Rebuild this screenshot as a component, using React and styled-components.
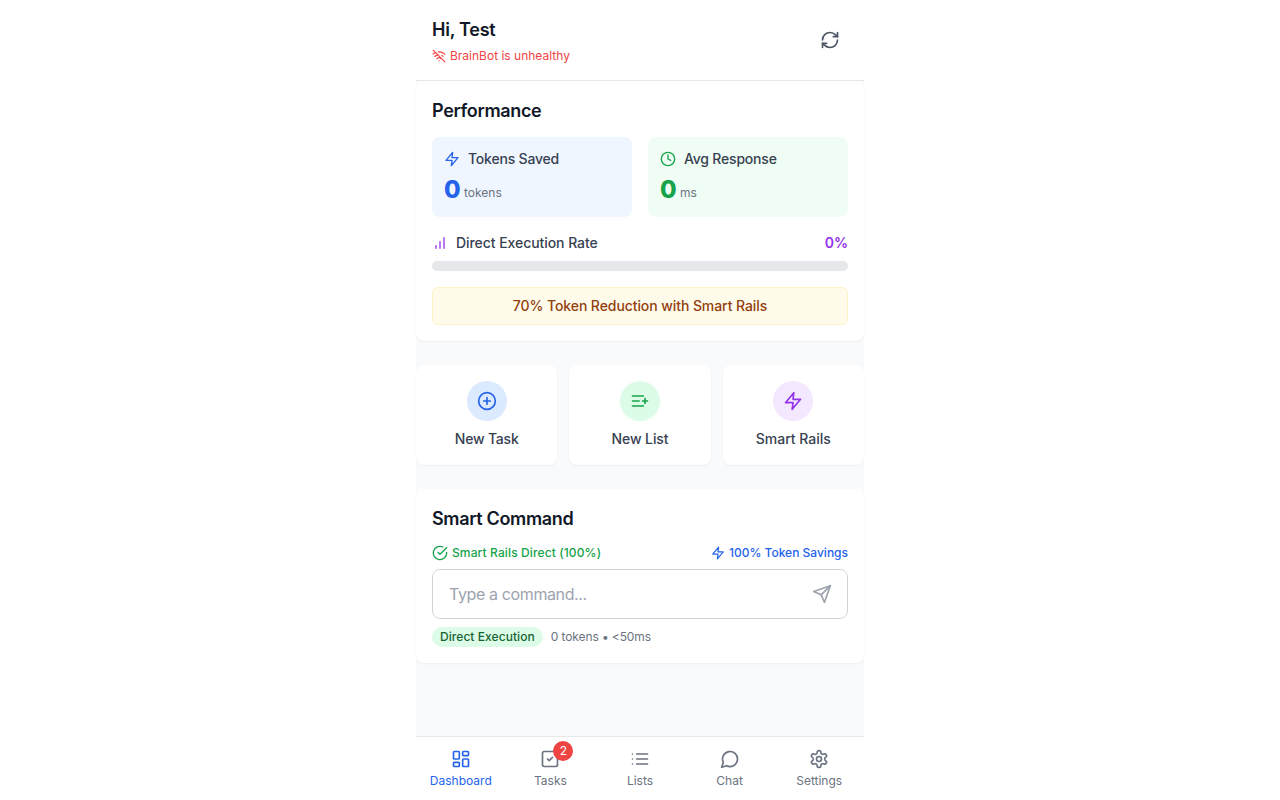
import React from "react";
import styled, { createGlobalStyle } from "styled-components";

const GlobalStyle = createGlobalStyle`
  *, *::before, *::after { box-sizing: border-box; }
  body {
    margin: 0;
    background: #fff;
    font-family: Inter, "Liberation Sans", sans-serif;
    color: #111827;
  }
  h1, h2, p { margin: 0; }
  button, input { font: inherit; }
  svg { display: block; flex-shrink: 0; }
`;

const Shell = styled.div`
  display: flex;
  flex-direction: column;
  width: 448px;
  height: 100vh;
  margin: 0 auto;
  background: #f9fafb;
`;

const Header = styled.header`
  display: flex;
  align-items: center;
  justify-content: space-between;
  padding: 16px;
  background: #fff;
  border-bottom: 1px solid #e5e7eb;
`;

const Title = styled.h1`
  font-size: 18px;
  line-height: 28px;
  font-weight: 600;
  letter-spacing: -0.25px;
`;

const Status = styled.p`
  display: flex;
  align-items: center;
  gap: 4px;
  margin-top: 4px;
  font-size: 12px;
  line-height: 16px;
  color: #ef4444;
`;

const IconButton = styled.button`
  display: flex;
  padding: ${(p) => p.$pad || "0"};
  border: 0;
  background: none;
  color: ${(p) => p.$color};
`;

const Main = styled.main`
  flex: 1;
  display: flex;
  flex-direction: column;
  gap: 24px;
  min-height: 0;
`;

const Card = styled.section`
  padding: 16px;
  background: #fff;
  border-radius: 8px;
  box-shadow: 0 1px 2px rgba(0, 0, 0, 0.05);
`;

const CardTitle = styled.h2`
  margin-bottom: 12px;
  font-size: 18px;
  line-height: 28px;
  font-weight: 600;
  letter-spacing: -0.34px;
`;

const Stats = styled.div`
  display: grid;
  grid-template-columns: 1fr 1fr;
  gap: 16px;
  margin-bottom: 16px;
`;

const Stat = styled.div`
  padding: 12px;
  border-radius: 8px;
  background: ${(p) => p.$bg};
  color: ${(p) => p.$color};
`;

const Label = styled.div`
  display: flex;
  align-items: center;
  gap: 8px;
  font-size: 14px;
  line-height: 20px;
  font-weight: 500;
  letter-spacing: ${(p) => p.$tracking || "-0.2px"};
  color: #374151;
  svg { color: ${(p) => p.$icon}; }
`;

const Value = styled.div`
  display: flex;
  align-items: flex-end;
  gap: 4px;
  height: 32px;
  margin-top: 4px;
  padding-top: 1px;
  font-size: 24px;
  line-height: 31px;
  font-weight: 800;
  letter-spacing: -0.6px;
`;

const Unit = styled.span`
  margin-bottom: 4px;
  font-size: 12px;
  line-height: 16px;
  font-weight: 400;
  letter-spacing: 0;
  color: #6b7280;
`;

const Row = styled.div`
  display: flex;
  align-items: center;
  justify-content: space-between;
  margin-bottom: 8px;
`;

const Rate = styled.span`
  font-size: 14px;
  line-height: 20px;
  font-weight: 600;
  color: #9333ea;
`;

const Track = styled.div`
  height: 10px;
  border-radius: 5px;
  background: #e5e7eb;
`;

const Banner = styled.p`
  margin-top: 16px;
  padding: 8px;
  border: 1px solid #fef3c7;
  border-radius: 6px;
  background: #fffbeb;
  font-size: 14px;
  line-height: 20px;
  font-weight: 500;
  letter-spacing: -0.08px;
  text-align: center;
  color: #92400e;
`;

const Actions = styled.div`
  display: grid;
  grid-template-columns: repeat(3, 1fr);
  gap: 12px;
`;

const Action = styled.button`
  display: flex;
  flex-direction: column;
  align-items: center;
  gap: 8px;
  padding: 16px;
  border: 0;
  border-radius: 8px;
  background: #fff;
  box-shadow: 0 1px 2px rgba(0, 0, 0, 0.05);
  font-size: 14px;
  line-height: 20px;
  font-weight: 500;
  letter-spacing: ${(p) => p.$tracking};
  color: #374151;
`;

const Bubble = styled.span`
  display: flex;
  align-items: center;
  justify-content: center;
  width: 40px;
  height: 40px;
  border-radius: 50%;
  background: ${(p) => p.$bg};
  color: ${(p) => p.$color};
`;

const Hint = styled.span`
  display: flex;
  align-items: center;
  gap: 4px;
  font-size: 12px;
  line-height: 16px;
  font-weight: 500;
  letter-spacing: ${(p) => p.$tracking || "0"};
  color: ${(p) => p.$color};
`;

const Field = styled.div`
  display: flex;
  align-items: center;
  padding: 0 15px 0 16px;
  height: 50px;
  border: 1px solid #d1d5db;
  border-radius: 8px;
`;

const Input = styled.input`
  flex: 1;
  min-width: 0;
  padding: 0;
  border: 0;
  outline: 0;
  background: none;
  font-size: 16px;
  line-height: 24px;
  letter-spacing: -0.38px;
  &::placeholder { color: #9ca3af; opacity: 1; }
`;

const Footnote = styled.div`
  display: flex;
  align-items: center;
  gap: 8px;
  margin-top: 8px;
  font-size: 12px;
  line-height: 16px;
  letter-spacing: -0.1px;
  color: #6b7280;
`;

const Pill = styled.span`
  padding: 2px 8px;
  border-radius: 10px;
  background: #dcfce7;
  font-weight: 500;
  letter-spacing: 0.06px;
  color: #166534;
`;

const Nav = styled.nav`
  display: grid;
  grid-template-columns: repeat(5, 1fr);
  height: 64px;
  background: #fff;
  border-top: 1px solid #e5e7eb;
`;

const NavItem = styled.a`
  display: flex;
  flex-direction: column;
  align-items: center;
  gap: 4px;
  padding-top: 12px;
  font-size: 12px;
  line-height: 16px;
  color: ${(p) => (p.$active ? "#2563eb" : "#6b7280")};
`;

const NavIcon = styled.span`
  position: relative;
`;

const Badge = styled.span`
  position: absolute;
  top: -8px;
  right: -13px;
  display: flex;
  align-items: center;
  justify-content: center;
  width: 20px;
  height: 20px;
  border-radius: 50%;
  background: #ef4444;
  font-size: 12px;
  line-height: 16px;
  color: #fff;
`;

const shapes = {
  wifiOff: <><path d="M12 20h.01" /><path d="M8.5 16.429a5 5 0 0 1 7 0" /><path d="M5 12.859a10 10 0 0 1 5.17-2.69" /><path d="M19 12.859a10 10 0 0 0-2.007-1.523" /><path d="M2 8.82a15 15 0 0 1 4.177-2.643" /><path d="M22 8.82a15 15 0 0 0-11.288-3.764" /><path d="m2 2 20 20" /></>,
  refresh: <><path d="M3 12a9 9 0 0 1 9-9 9.75 9.75 0 0 1 6.74 2.74L21 8" /><path d="M21 3v5h-5" /><path d="M21 12a9 9 0 0 1-9 9 9.75 9.75 0 0 1-6.74-2.74L3 16" /><path d="M8 16H3v5" /></>,
  zap: <path d="M13 2 3 14h9l-1 8 10-12h-9l1-8z" />,
  clock: <><circle cx="12" cy="12" r="10" /><path d="M12 6v6l4 2" /></>,
  bars: <path d="M12 20V10M18 20V4M6 20v-4" />,
  plus: <><circle cx="12" cy="12" r="10" /><path d="M12 8v8M8 12h8" /></>,
  listPlus: <path d="M11 12H3M16 6H3M16 18H3M18 9v6M21 12h-6" />,
  check: <><path d="M22 11.08V12a10 10 0 1 1-5.93-9.14" /><path d="m9 11 3 3L22 4" /></>,
  send: <><path d="m22 2-7 20-4-9-9-4Z" /><path d="M22 2 11 13" /></>,
  dashboard: <><rect width="7" height="9" x="3" y="3" rx="1" /><rect width="7" height="5" x="14" y="3" rx="1" /><rect width="7" height="9" x="14" y="12" rx="1" /><rect width="7" height="5" x="3" y="16" rx="1" /></>,
  tasks: <><rect width="18" height="18" x="3" y="3" rx="2" /><path d="m9 12 2 2 4-4" /></>,
  list: <path d="M8 6h13M8 12h13M8 18h13M3 6h.01M3 12h.01M3 18h.01" />,
  chat: <path d="M7.9 20A9 9 0 1 0 4 16.1L2 22Z" />,
  settings: <><path d="M12.22 2h-.44a2 2 0 0 0-2 2v.18a2 2 0 0 1-1 1.73l-.43.25a2 2 0 0 1-2 0l-.15-.08a2 2 0 0 0-2.73.73l-.22.38a2 2 0 0 0 .73 2.73l.15.1a2 2 0 0 1 1 1.72v.51a2 2 0 0 1-1 1.74l-.15.09a2 2 0 0 0-.73 2.73l.22.38a2 2 0 0 0 2.73.73l.15-.08a2 2 0 0 1 2 0l.43.25a2 2 0 0 1 1 1.73V20a2 2 0 0 0 2 2h.44a2 2 0 0 0 2-2v-.18a2 2 0 0 1 1-1.73l.43-.25a2 2 0 0 1 2 0l.15.08a2 2 0 0 0 2.73-.73l.22-.39a2 2 0 0 0-.73-2.73l-.15-.08a2 2 0 0 1-1-1.74v-.5a2 2 0 0 1 1-1.74l.15-.09a2 2 0 0 0 .73-2.73l-.22-.38a2 2 0 0 0-2.73-.73l-.15.08a2 2 0 0 1-2 0l-.43-.25a2 2 0 0 1-1-1.73V4a2 2 0 0 0-2-2z" /><circle cx="12" cy="12" r="3" /></>,
};

function Icon({ name, size = 20 }) {
  return (
    <svg width={size} height={size} viewBox="0 0 24 24" fill="none" stroke="currentColor" strokeWidth="2" strokeLinecap="round" strokeLinejoin="round">
      {shapes[name]}
    </svg>
  );
}

const stats = [
  { label: "Tokens Saved", unit: "tokens", icon: "zap", bg: "#eff6ff", color: "#2563eb" },
  { label: "Avg Response", unit: "ms", icon: "clock", bg: "#f0fdf4", color: "#16a34a" },
];

const actions = [
  { label: "New Task", icon: "plus", bg: "#dbeafe", color: "#2563eb", tracking: "-0.2px" },
  { label: "New List", icon: "listPlus", bg: "#dcfce7", color: "#16a34a", tracking: "-0.1px" },
  { label: "Smart Rails", icon: "zap", bg: "#f3e8ff", color: "#9333ea", tracking: "0" },
];

const tabs = [
  { label: "Dashboard", icon: "dashboard", active: true },
  { label: "Tasks", icon: "tasks", badge: 2 },
  { label: "Lists", icon: "list" },
  { label: "Chat", icon: "chat" },
  { label: "Settings", icon: "settings" },
];

export default function App() {
  return (
    <>
      <GlobalStyle />
      <Shell>
        <Header>
          <div>
            <Title>Hi, Test</Title>
            <Status><Icon name="wifiOff" size={14} />BrainBot is unhealthy</Status>
          </div>
          <IconButton $pad="8px" $color="#4b5563" aria-label="Refresh"><Icon name="refresh" /></IconButton>
        </Header>
        <Main>
          <Card>
            <CardTitle>Performance</CardTitle>
            <Stats>
              {stats.map((s) => (
                <Stat key={s.label} $bg={s.bg} $color={s.color}>
                  <Label $icon={s.color}><Icon name={s.icon} size={16} />{s.label}</Label>
                  <Value>0<Unit>{s.unit}</Unit></Value>
                </Stat>
              ))}
            </Stats>
            <Row>
              <Label $icon="#9333ea" $tracking="-0.06px"><Icon name="bars" size={16} />Direct Execution Rate</Label>
              <Rate>0%</Rate>
            </Row>
            <Track />
            <Banner>70% Token Reduction with Smart Rails</Banner>
          </Card>
          <Actions>
            {actions.map((a) => (
              <Action key={a.label} $tracking={a.tracking}>
                <Bubble $bg={a.bg} $color={a.color}><Icon name={a.icon} /></Bubble>
                {a.label}
              </Action>
            ))}
          </Actions>
          <Card>
            <CardTitle>Smart Command</CardTitle>
            <Row>
              <Hint $color="#16a34a" $tracking="0.12px"><Icon name="check" size={16} />Smart Rails Direct (100%)</Hint>
              <Hint $color="#2563eb"><Icon name="zap" size={14} />100% Token Savings</Hint>
            </Row>
            <Field>
              <Input placeholder="Type a command..." />
              <IconButton $color="#9ca3af" aria-label="Send"><Icon name="send" /></IconButton>
            </Field>
            <Footnote><Pill>Direct Execution</Pill><span>0 tokens • &lt;50ms</span></Footnote>
          </Card>
        </Main>
        <Nav>
          {tabs.map((t) => (
            <NavItem key={t.label} $active={t.active}>
              <NavIcon><Icon name={t.icon} />{t.badge && <Badge>{t.badge}</Badge>}</NavIcon>
              {t.label}
            </NavItem>
          ))}
        </Nav>
      </Shell>
    </>
  );
}
